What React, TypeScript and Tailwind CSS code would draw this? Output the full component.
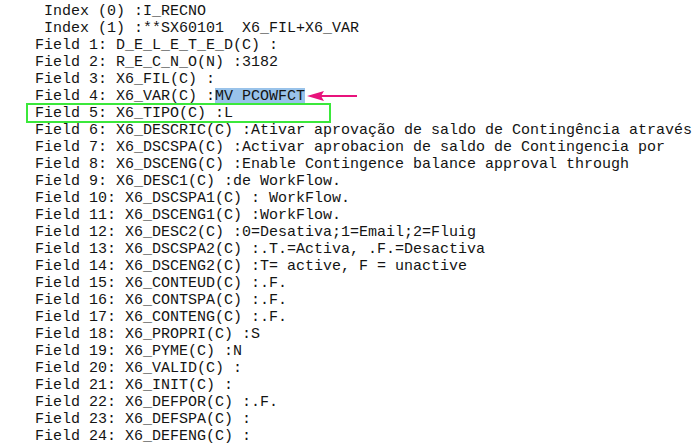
import React from "react";

const lines: string[] = [
  " Index (0) :I_RECNO",
  " Index (1) :**SX60101  X6_FIL+X6_VAR",
  "Field 1: D_E_L_E_T_E_D(C) :",
  "Field 2: R_E_C_N_O(N) :3182",
  "Field 3: X6_FIL(C) :",
  "__FIELD4__",
  "__FIELD5__",
  "Field 6: X6_DESCRIC(C) :Ativar aprovação de saldo de Contingência através",
  "Field 7: X6_DSCSPA(C) :Activar aprobacion de saldo de Contingencia por",
  "Field 8: X6_DSCENG(C) :Enable Contingence balance approval through",
  "Field 9: X6_DESC1(C) :de WorkFlow.",
  "Field 10: X6_DSCSPA1(C) : WorkFlow.",
  "Field 11: X6_DSCENG1(C) :WorkFlow.",
  "Field 12: X6_DESC2(C) :0=Desativa;1=Email;2=Fluig",
  "Field 13: X6_DSCSPA2(C) :.T.=Activa, .F.=Desactiva",
  "Field 14: X6_DSCENG2(C) :T= active, F = unactive",
  "Field 15: X6_CONTEUD(C) :.F.",
  "Field 16: X6_CONTSPA(C) :.F.",
  "Field 17: X6_CONTENG(C) :.F.",
  "Field 18: X6_PROPRI(C) :S",
  "Field 19: X6_PYME(C) :N",
  "Field 20: X6_VALID(C) :",
  "Field 21: X6_INIT(C) :",
  "Field 22: X6_DEFPOR(C) :.F.",
  "Field 23: X6_DEFSPA(C) :",
  "Field 24: X6_DEFENG(C) :",
];

function Arrow() {
  return (
    <svg
      className="absolute left-[2px] top-[1px]"
      width="52"
      height="14"
      viewBox="0 0 52 14"
    >
      <line x1="12" y1="7" x2="50" y2="7" stroke="#e8137c" strokeWidth="2" />
      <polygon points="0,7 17,2 14,7 17,12" fill="#e8137c" />
    </svg>
  );
}

export default function App() {
  return (
    <div
      className="h-[446px] w-[694px] overflow-hidden bg-white pl-[35px] pt-[3px] text-[15px] leading-[17px] text-[#141414]"
      style={{ fontFamily: '"Liberation Mono", "Courier New", monospace' }}
    >
      {lines.map((line, i) => {
        if (line === "__FIELD4__") {
          return (
            <div key={i} className="whitespace-pre">
              Field 4: X6_VAR(C) :
              <span className="relative bg-[#99c3ea]">
                MV PCOWFCT
                <span className="absolute left-full top-0 h-full w-[56px]">
                  <Arrow />
                </span>
              </span>
            </div>
          );
        }
        if (line === "__FIELD5__") {
          return (
            <div key={i} className="relative whitespace-pre">
              Field 5: X6_TIPO(C) :L
              <span className="absolute left-[-9px] top-[-2px] h-[20px] w-[305px] border-2 border-[#3be83b]" />
            </div>
          );
        }
        return (
          <div key={i} className="whitespace-pre">
            {line}
          </div>
        );
      })}
    </div>
  );
}
